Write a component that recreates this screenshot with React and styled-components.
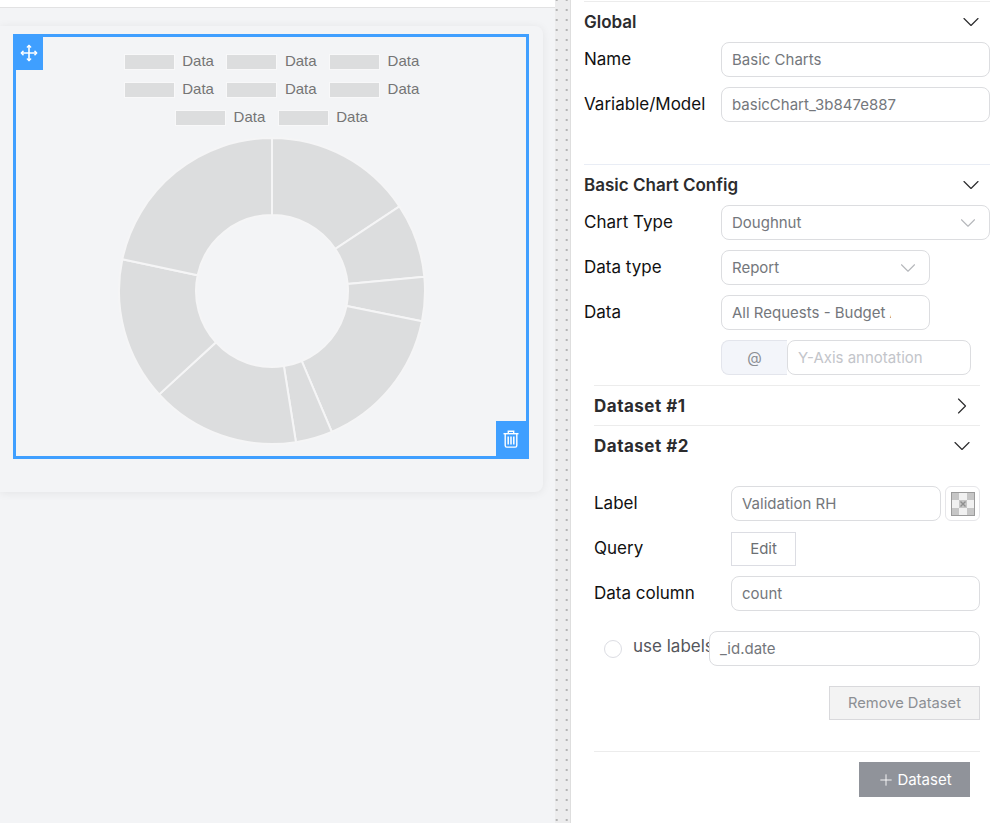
import React from 'react'
import styled, { createGlobalStyle } from 'styled-components'
import { ChevronDown, ChevronRight, Plus } from 'lucide-react'

const GlobalStyle = createGlobalStyle`
  html, body {
    margin: 0;
    padding: 0;
    background: #fff;
  }
  * { box-sizing: border-box; }
`

const Page = styled.div`
  display: flex;
  width: 1000px;
  height: 823px;
  overflow: hidden;
  font-family: Inter, "Liberation Sans", sans-serif;
`

const Canvas = styled.div`
  width: 555px;
  flex-shrink: 0;
  background: #f3f4f6;
`

const TopStrip = styled.div`
  height: 8px;
  background: #fff;
  border-bottom: 1px solid #e2e2e3;
`

const Card = styled.div`
  width: 543px;
  height: 466px;
  margin-top: 18px;
  padding: 8px 14px 0 13px;
  background: #f3f4f6;
  border-radius: 0 8px 8px 0;
  box-shadow: 0 1px 10px rgba(0, 0, 0, 0.07);
`

const Frame = styled.div`
  position: relative;
  height: 425px;
  border: 3px solid #3f9fff;
  padding-top: 15px;
`

const Handle = styled.div`
  position: absolute;
  display: flex;
  align-items: center;
  justify-content: center;
  background: #3f9fff;
  color: #fff;
  ${p => (p.$corner === 'move'
    ? 'left: 0; top: 0; width: 27px; height: 33px; padding: 0 2px 2px 0;'
    : 'right: -3px; bottom: -3px; width: 33px; height: 38px; padding: 0 3px 3px 0;')}
`

const Legend = styled.div`
  display: flex;
  flex-direction: column;
  align-items: center;
  gap: 8px;
  padding-left: 1px;
  font-family: "Liberation Sans", Arial, sans-serif;
  font-size: 15px;
  color: #757575;
`

const LegendRow = styled.div`
  display: flex;
  gap: 12.5px;
  height: 20px;
`

const LegendItem = styled.div`
  display: flex;
  align-items: center;
  gap: 7.5px;
`

const LegendText = styled.span`
  margin-bottom: 3px;
`

const Swatch = styled.span`
  width: 51px;
  height: 16px;
  background: #dcddde;
  border: 1px solid #f8f8f9;
`

const ChartBox = styled.div`
  display: flex;
  justify-content: center;
  margin: 8px 0 0 2px;
`

const Splitter = styled.div`
  width: 16px;
  flex-shrink: 0;
  background-color: #ececed;
  background-image: radial-gradient(#b4b4b4 1px, transparent 1.3px);
  background-size: 10px 10px;
  background-position: -3.3px -5px;
  border-right: 1px solid #dedede;
`

const Panel = styled.div`
  flex: 1;
  min-width: 0;
  padding: 0 10px 0 13px;
  color: #111;
`

const Section = styled.div`
  border-top: 1px solid ${p => (p.$light ? '#e9edf5' : '#ececec')};
  margin-top: ${p => p.$top || 0}px;
`

const SectionHead = styled.div`
  display: flex;
  align-items: center;
  justify-content: space-between;
  height: 40px;
  padding-right: 5px;
  font-size: 17px;
  font-weight: 600;
  color: #2c2c2e;
`

const Row = styled.div`
  display: flex;
  align-items: center;
  height: 35px;
  margin-bottom: 10px;
  font-size: 17px;
`

const Label = styled.label`
  width: 137px;
  flex-shrink: 0;
  padding-bottom: 2px;
  white-space: nowrap;
`

const Field = styled.div`
  display: flex;
  align-items: center;
  justify-content: space-between;
  flex-shrink: 0;
  width: ${p => p.$width || 269}px;
  height: 35px;
  padding: 0 10px;
  border: 1px solid #dcdde0;
  border-radius: 8px;
  background: #fff;
  color: ${p => (p.$placeholder ? '#c3c5ca' : '#74777c')};
  font-size: 15px;
  white-space: nowrap;
  overflow: hidden;
`

const FieldText = styled.span`
  display: block;
  max-width: 159px;
  overflow: hidden;
`

const SelectArrow = styled(ChevronDown)`
  flex-shrink: 0;
  margin-right: -2px;
`

const AtBox = styled.div`
  display: flex;
  align-items: center;
  justify-content: center;
  width: 66px;
  height: 35px;
  background: #f3f5fa;
  border: 1px solid #e3e5ec;
  border-right: 0;
  border-radius: 8px 0 0 8px;
  color: #8a8d93;
  font-size: 15px;
`

const Nested = styled.div`
  margin: 0 10px 0 10px;
`

const NestedHead = styled(SectionHead)`
  border-top: 1px solid #ececec;
  padding-right: 4px;
  font-weight: 700;
  letter-spacing: 0.5px;
`

const NestedBody = styled.div`
  padding-top: 21px;
`

const ColorButton = styled.div`
  display: flex;
  align-items: center;
  justify-content: center;
  width: 35px;
  height: 35px;
  margin-left: 4px;
  border: 1px solid #e6e6e9;
  border-radius: 6px;
`

const EditButton = styled.div`
  display: flex;
  align-items: center;
  justify-content: center;
  width: 65px;
  height: 34px;
  border: 1px solid #dcdde3;
  color: #6c6f74;
  font-size: 15px;
`

const RadioRow = styled.div`
  display: flex;
  align-items: center;
  height: 35px;
  margin-top: 20px;
  padding-left: 10px;
`

const Radio = styled.span`
  width: 18px;
  height: 18px;
  flex-shrink: 0;
  border: 1px solid #dcdde3;
  border-radius: 50%;
`

const RadioLabel = styled.span`
  width: 76px;
  flex-shrink: 0;
  margin-left: 11px;
  margin-top: -6px;
  overflow: hidden;
  white-space: nowrap;
  font-size: 17px;
  color: #54565c;
`

const Actions = styled.div`
  display: flex;
  justify-content: flex-end;
  margin-top: 20px;
`

const RemoveButton = styled.div`
  display: flex;
  align-items: center;
  justify-content: center;
  width: 151px;
  height: 34px;
  background: #f3f3f3;
  border: 1px solid #d9d9dc;
  color: #8c8f94;
  font-size: 14.7px;
`

const Footer = styled.div`
  display: flex;
  justify-content: flex-end;
  margin-top: 31px;
  padding: 10px 10px 0 0;
  border-top: 1px solid #ececec;
`

const AddButton = styled.div`
  display: flex;
  align-items: center;
  justify-content: center;
  gap: 2px;
  width: 111px;
  height: 35px;
  background: #90939a;
  color: #fff;
  font-size: 15px;
`

const legendRows = [3, 3, 2]
const sliceAngles = [0, 56.4, 84.7, 101.4, 157, 171, 227.5, 282, 360]

const point = (cx, cy, r, deg) => {
  const rad = (deg * Math.PI) / 180
  return `${(cx + r * Math.sin(rad)).toFixed(2)} ${(cy - r * Math.cos(rad)).toFixed(2)}`
}

const slicePath = (from, to) => {
  const large = to - from > 180 ? 1 : 0
  const [R, r] = [153, 76]
  return `M${point(155, 155, R, from)} A${R} ${R} 0 ${large} 1 ${point(155, 155, R, to)} `
    + `L${point(155, 155, r, to)} A${r} ${r} 0 ${large} 0 ${point(155, 155, r, from)} Z`
}

function Doughnut() {
  return (
    <svg width="310" height="310" viewBox="0 0 310 310">
      {sliceAngles.slice(0, -1).map((a, i) => (
        <path key={a} d={slicePath(a, sliceAngles[i + 1])} fill="#dcddde" stroke="#f5f5f6" strokeWidth="2" />
      ))}
    </svg>
  )
}

function MoveIcon() {
  return (
    <svg width="18" height="18" viewBox="0 0 18 18" fill="none" stroke="#fff" strokeWidth="1.6" strokeLinecap="round" strokeLinejoin="round">
      <path d="M9 1.5v15M1.5 9h15" />
      <path d="M7.4 3 9 1.5 10.6 3M7.4 15 9 16.5l1.6-1.5M3 7.4 1.5 9 3 10.6M15 7.4 16.5 9 15 10.6" />
    </svg>
  )
}

function TrashIcon() {
  return (
    <svg width="18" height="18" viewBox="0 0 18 18" fill="none" stroke="#fff" strokeWidth="1.4">
      <path d="M1.5 3.7h15" />
      <path d="M6.3 3.4V1.3h5.4v2.1" />
      <path d="M3.2 3.7v11.8c0 1 .6 1.6 1.5 1.6h8.6c.9 0 1.5-.6 1.5-1.6V3.7" />
      <path d="M6.2 6.5v8M9 6.5v8M11.8 6.5v8" strokeWidth="1.5" />
    </svg>
  )
}

function TransparentIcon() {
  return (
    <svg width="24" height="24" viewBox="0 0 24 24">
      <rect x="0.5" y="0.5" width="23" height="23" fill="#f1f1f1" stroke="#9b9b9b" />
      <path d="M1 1h7v7H1zM16 1h7v7h-7zM8 8h8v8H8zM1 16h7v7H1zM16 16h7v7h-7z" fill="#c6c6c6" />
      <path d="M9.5 9.5l5 5M14.5 9.5l-5 5" stroke="#8f8f8f" strokeWidth="1.4" />
    </svg>
  )
}

export default function App() {
  return (
    <Page>
      <GlobalStyle />
      <Canvas>
        <TopStrip />
        <Card>
          <Frame>
            <Handle $corner="move"><MoveIcon /></Handle>
            <Legend>
              {legendRows.map((count, r) => (
                <LegendRow key={r}>
                  {Array.from({ length: count }).map((_, i) => (
                    <LegendItem key={i}>
                      <Swatch />
                      <LegendText>Data</LegendText>
                    </LegendItem>
                  ))}
                </LegendRow>
              ))}
            </Legend>
            <ChartBox><Doughnut /></ChartBox>
            <Handle $corner="trash"><TrashIcon /></Handle>
          </Frame>
        </Card>
      </Canvas>
      <Splitter />
      <Panel>
        <Section $top={1}>
          <SectionHead>
            Global
            <ChevronDown size={28} strokeWidth={1} />
          </SectionHead>
          <Row>
            <Label>Name</Label>
            <Field>Basic Charts</Field>
          </Row>
          <Row>
            <Label>Variable/Model</Label>
            <Field>basicChart_3b847e887</Field>
          </Row>
        </Section>
        <Section $light $top={42}>
          <SectionHead>
            Basic Chart Config
            <ChevronDown size={28} strokeWidth={1} />
          </SectionHead>
          <Row>
            <Label>Chart Type</Label>
            <Field>Doughnut<SelectArrow size={26} strokeWidth={1} color="#b5b7bb" /></Field>
          </Row>
          <Row>
            <Label>Data type</Label>
            <Field $width={209}>Report<SelectArrow size={26} strokeWidth={1} color="#b5b7bb" /></Field>
          </Row>
          <Row>
            <Label>Data</Label>
            <Field $width={209}><FieldText>All Requests - Budget Analysis</FieldText></Field>
          </Row>
          <Row>
            <Label />
            <AtBox>@</AtBox>
            <Field $width={184} $placeholder>Y-Axis annotation</Field>
          </Row>
          <Nested>
            <NestedHead>
              Dataset #1
              <ChevronRight size={28} strokeWidth={1} />
            </NestedHead>
            <NestedHead>
              Dataset #2
              <ChevronDown size={28} strokeWidth={1} />
            </NestedHead>
            <NestedBody>
              <Row>
                <Label>Label</Label>
                <Field $width={210}>Validation RH</Field>
                <ColorButton><TransparentIcon /></ColorButton>
              </Row>
              <Row>
                <Label>Query</Label>
                <EditButton>Edit</EditButton>
              </Row>
              <Row>
                <Label>Data column</Label>
                <Field $width={249}>count</Field>
              </Row>
              <RadioRow>
                <Radio />
                <RadioLabel>use labels</RadioLabel>
                <Field $width={271}>_id.date</Field>
              </RadioRow>
              <Actions>
                <RemoveButton>Remove Dataset</RemoveButton>
              </Actions>
              <Footer>
                <AddButton><Plus size={18} strokeWidth={1.2} />Dataset</AddButton>
              </Footer>
            </NestedBody>
          </Nested>
        </Section>
      </Panel>
    </Page>
  )
}
